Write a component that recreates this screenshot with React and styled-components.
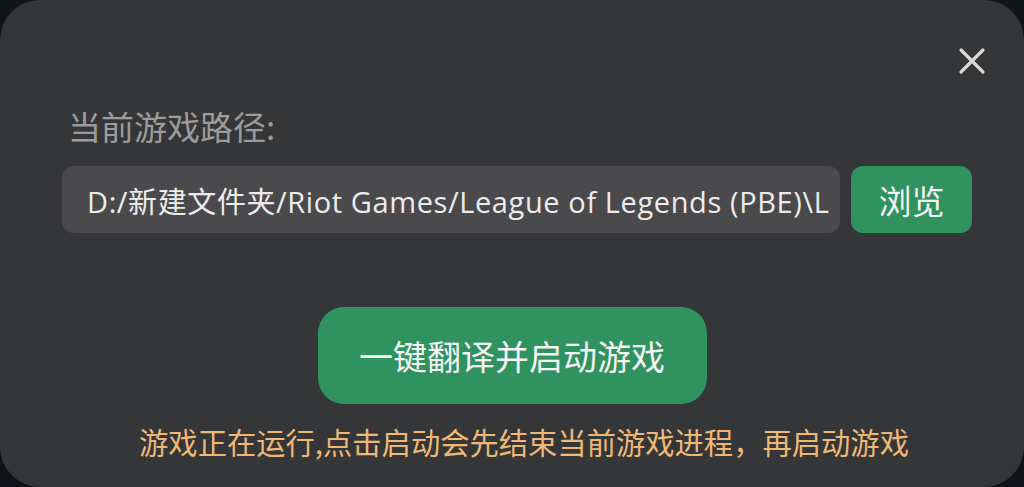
import React, { useState } from "react";
import styled, { createGlobalStyle } from "styled-components";

const GlobalStyle = createGlobalStyle`
  html, body {
    margin: 0;
    padding: 0;
    background: #0d1519;
    overflow: hidden;
  }
  * { box-sizing: border-box; }
`;

const Panel = styled.div`
  width: 100vw;
  height: 100vh;
  background-color: #353638;
  border-radius: 40px;
  display: flex;
  flex-direction: column;
  padding: 44px 52px 0 62px;
  font-family: "Open Sans", "Noto Sans CJK SC", sans-serif;
`;

const TopBar = styled.div`
  display: flex;
  justify-content: flex-end;
  height: 34px;
`;

const CloseButton = styled.button`
  width: 34px;
  height: 34px;
  padding: 0;
  margin-right: -17px;
  border: none;
  background: none;
  display: flex;
  align-items: center;
  justify-content: center;
  cursor: pointer;
`;

const Label = styled.div`
  margin-top: 26px;
  padding-left: 6px;
  color: #9c9c9c;
  font-size: 33px;
  line-height: 44px;
  font-family: "Noto Sans CJK SC", sans-serif;
`;

const PathRow = styled.div`
  display: flex;
  gap: 11px;
  margin-top: 18px;
  height: 67px;
`;

const PathInput = styled.input`
  flex: 1;
  min-width: 0;
  height: 100%;
  border: none;
  outline: none;
  border-radius: 12px;
  background-color: #4a4a4c;
  color: #ececec;
  padding: 0 10px 0 25px;
  font-size: 29px;
  letter-spacing: 0.6px;
  font-family: "Open Sans", "Noto Sans CJK SC", sans-serif;
`;

const GreenButton = styled.button`
  border: none;
  color: #f4f4f4;
  background-color: #2f925f;
  font-family: "Noto Sans CJK SC", sans-serif;
  cursor: pointer;
  width: ${(p) => p.$w}px;
  height: ${(p) => p.$h}px;
  border-radius: ${(p) => p.$r}px;
  font-size: ${(p) => p.$fs}px;
  padding: 0;
  flex-shrink: 0;
  &:hover {
    background-color: #33a068;
  }
`;

const LaunchArea = styled.div`
  display: flex;
  flex-direction: column;
  align-items: center;
  margin-top: 74px;
  margin-left: -62px;
  margin-right: -52px;
`;

const Warning = styled.div`
  margin-top: 17px;
  margin-left: 24px;
  color: #efb877;
  font-size: 29.3px;
  line-height: 40px;
  font-family: "Noto Sans CJK SC", sans-serif;
  white-space: nowrap;
`;

export default function App() {
  const [path, setPath] = useState(
    "D:/新建文件夹/Riot Games/League of Legends (PBE)\\LeagueClient"
  );

  return (
    <>
      <GlobalStyle />
      <Panel>
        <TopBar>
          <CloseButton aria-label="close">
            <svg width="28" height="28" viewBox="0 0 28 28">
              <path
                d="M3 3 L25 25 M25 3 L3 25"
                stroke="#d9d9d9"
                strokeWidth="3.2"
                strokeLinecap="round"
              />
            </svg>
          </CloseButton>
        </TopBar>
        <Label>当前游戏路径:</Label>
        <PathRow>
          <PathInput value={path} onChange={(e) => setPath(e.target.value)} />
          <GreenButton $w={121} $h={67} $r={12} $fs={33}>
            浏览
          </GreenButton>
        </PathRow>
        <LaunchArea>
          <GreenButton $w={389} $h={97} $r={26} $fs={34}>
            一键翻译并启动游戏
          </GreenButton>
          <Warning>游戏正在运行,点击启动会先结束当前游戏进程，再启动游戏</Warning>
        </LaunchArea>
      </Panel>
    </>
  );
}
